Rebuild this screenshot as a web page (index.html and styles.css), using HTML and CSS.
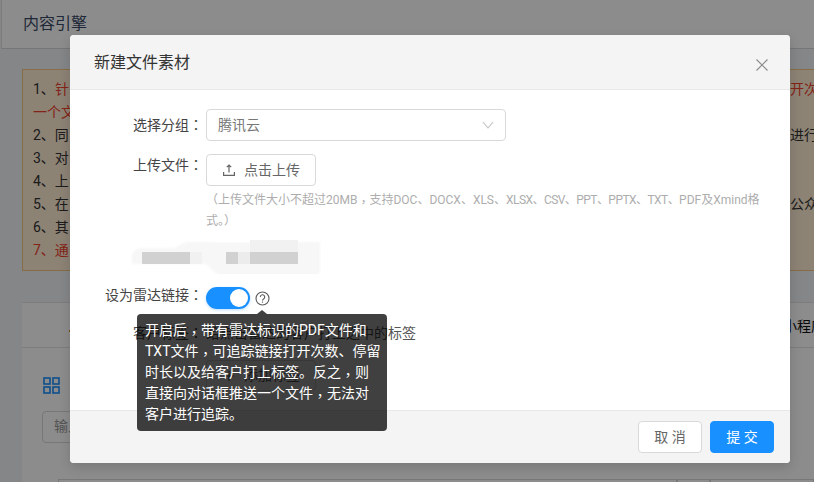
FILE: index.html
```html
<!DOCTYPE html>
<html lang="zh-CN">
<head>
<meta charset="utf-8">
<title>新建文件素材</title>
<link rel="stylesheet" href="styles.css">
</head>
<body>
<div class="page">
  <header class="page-head">内容引擎</header>
  <section class="notice">
    <div class="line red-after"><span><b class="dark">1、</b>针</span><span>开次</span></div>
    <div class="line red-after"><span>一个文</span><span></span></div>
    <div class="line"><span>2、同</span><span>进行</span></div>
    <div class="line"><span>3、对</span><span></span></div>
    <div class="line"><span>4、上</span><span></span></div>
    <div class="line"><span>5、在</span><span>公众</span></div>
    <div class="line"><span>6、其</span><span></span></div>
    <div class="line red-after"><span>7、通</span><span></span></div>
  </section>
  <section class="panel">
    <div class="tabs"><i class="tab-mark"></i><span class="tab-right">小程序</span></div>
    <div class="tools">
      <svg class="grid-icon" width="17" height="17" viewBox="0 0 17 17" fill="none" stroke="#1890ff" stroke-width="1.6"><rect x="1" y="1" width="6" height="6"/><rect x="10" y="1" width="6" height="6"/><rect x="1" y="10" width="6" height="6"/><rect x="10" y="10" width="6" height="6"/></svg>
      <div class="search">输入</div>
    </div>
    <div class="lower"><span class="lower-a"></span><span class="lower-b"></span><span class="lower-c"></span></div>
  </section>
</div>

<div class="overlay"></div>

<div class="modal">
  <div class="modal-head">
    <h2 class="modal-title">新建文件素材</h2>
    <svg class="close" width="12" height="12" viewBox="0 0 12 12" fill="none" stroke="#8c8c8c" stroke-width="1.2"><path d="M.5.5l11 11M11.500.5l-11 11"/></svg>
  </div>
  <div class="modal-body">
    <div class="row row-select">
      <label class="label">选择分组<span class="p" lang="zh-TW">：</span></label>
      <div class="select"><span>腾讯云</span>
        <svg width="12" height="8" viewBox="0 0 12 8" fill="none" stroke="#bfbfbf" stroke-width="1.1"><path d="M1 1l5 6 5-6"/></svg>
      </div>
    </div>
    <div class="row row-upload">
      <label class="label">上传文件<span class="p" lang="zh-TW">：</span></label>
      <div class="control">
        <div class="btn-upload">
          <svg width="12" height="12" viewBox="0 0 12 12" fill="none" stroke="#666" stroke-width="1.2"><path d="M6 8.500V1M3.800 3.200L6 1l2.200 2.200M.6 8v3.400h10.800V8"/></svg>
          <span>点击上传</span>
        </div>
        <p class="hint">（上传文件大小不超过20MB<span class="p c" lang="zh-TW">，</span>支持DOC、DOCX、XLS、<span class="tight">XLSX、CSV、PPT、PPTX、TXT、</span>PDF及Xmind格式。）</p>
      </div>
    </div>
    <svg class="mosaic" width="200" height="44" viewBox="0 0 200 44">
      <defs><filter id="soft"><feGaussianBlur stdDeviation="1"/></filter></defs>
      <g filter="url(#soft)" fill="#f7f7f7">
        <path d="M2 34v-9q2-7 12-7h30l12-6H190v30q-1 5-10 5H90L76 34z"/>
      </g>
      <rect x="12" y="22" width="48" height="12" fill="#d1d1d1"/>
      <rect x="60" y="22" width="12" height="12" fill="#f1f1f1"/>
      <rect x="96" y="22" width="12" height="12" fill="#d1d1d1"/>
      <rect x="108" y="22" width="12" height="12" fill="#ececec"/>
      <rect x="120" y="22" width="48" height="12" fill="#d1d1d1"/>
      <rect x="120" y="10" width="48" height="12" fill="#f1f1f1"/>
      <rect x="84" y="0" width="36" height="12" fill="#fff"/>
    </svg>
    <div class="row row-switch">
      <label class="label">设为雷达链接<span class="p" lang="zh-TW">：</span></label>
      <div class="switch-wrap">
        <span class="switch"><i class="knob"></i></span>
        <svg class="help" width="15" height="15" viewBox="0 0 15 15" fill="none" stroke="#595959"><circle cx="7.5" cy="7.500" r="6.500" stroke-width="1.1"/><path d="M5.300 6a2.200 2.200 0 1 1 3.300 1.900c-.7.4-1.100.7-1.100 1.500" stroke-width="1.1"/><path d="M7.500 10.500v1.200" stroke-width="1.1"/></svg>
      </div>
    </div>
    <div class="row row-tags">
      <label class="label">客户标签<span class="p" lang="zh-TW">：</span></label>
      <span class="tag-text">给点击雷达的客户打上选中的标签</span>
    </div>
    <div class="row row-tagbtn">
      <span></span>
      <div class="btn-tag">
        <svg width="12" height="12" viewBox="0 0 12 12" fill="none" stroke="#666" stroke-width="1.2"><path d="M6 1v10M1 6h10"/></svg>
        <span>添加标签</span>
      </div>
    </div>
  </div>
  <div class="modal-foot">
    <button class="btn">取 消</button>
    <button class="btn btn-primary">提 交</button>
  </div>
  <div class="tooltip">开启后<span class="p c" lang="zh-TW">，</span>带有雷达标识的PDF文件和TXT文件<span class="p c" lang="zh-TW">，</span>可追踪链接打开次数、停留时长以及给客户打上标签。反之<span class="p c" lang="zh-TW">，</span>则直接向对话框推送一个文件<span class="p c" lang="zh-TW">，</span>无法对客户进行追踪。</div>
</div>
</body>
</html>
```

FILE: styles.css
```css
* { box-sizing: border-box; }
html, body { margin: 0; height: 100%; }
body {
  position: relative;
  width: 814px;
  height: 482px;
  overflow: hidden;
  background: #f2f4f8;
  color: #333;
  font: 14px/21px Roboto, "Noto Sans CJK SC", sans-serif;
}
.p { font-family: "Noto Sans CJK TC", sans-serif; line-height: 1; }
.c { vertical-align: -3px; }
.tight { letter-spacing: -.55px; }
.page { height: 482px; overflow: hidden; }
.page-head {
  height: 49px;
  padding: 13px 21px 0;
  margin-left: 1px;
  font-size: 16px;
  line-height: 22px;
  color: #3a4a66;
  background: #fff;
  border-bottom: 1px solid #d8d8d8;
  border-left: 1px solid #e2e2e2;
}
.notice {
  margin: 20px -2px 0 22px;
  padding: 8px 0 9px 10px;
  height: 202px;
  background: #ffeed6;
  border: 1px solid #f5c77e;
  line-height: 23px;
  white-space: nowrap;
}
.line { display: grid; grid-template-columns: 757px 1fr; }
.red-after { color: #f0402a; }
.dark { font-weight: 400; color: #333; }
.panel { margin: 31px 0 0 22px; background: #fff; height: 180px; overflow: hidden; }
.tabs {
  display: flex;
  justify-content: space-between;
  height: 46px;
  border-top: 1px solid #e3e3e3;
  border-bottom: 1px solid #e3e3e3;
  white-space: nowrap;
}
.tab-mark { width: 2px; height: 2px; margin: 27px 0 0 47px; background: #e88a12; }
.tab-right { margin: 13px -11px 0 0; color: #111; }
.tools { padding: 29px 0 0 21px; }
.grid-icon { display: block; }
.search {
  width: 200px;
  height: 32px;
  margin: 17px 0 0 -1px;
  padding: 4px 11px;
  border: 1px solid #d9d9d9;
  border-radius: 4px;
  color: #999;
}
.lower { display: flex; margin: 36px 0 0 36px; height: 10px; }
.lower span { border: 1px solid #d9d9d9; height: 10px; }
.lower-a { width: 619px; }
.lower-b { width: 33px; }
.lower-c { flex: 1; }

.overlay { position: absolute; inset: 0; background: rgba(0, 0, 0, .45); }

.modal {
  position: absolute;
  left: 70px;
  top: 35px;
  width: 720px;
  height: 428px;
  display: flex;
  flex-direction: column;
  background: #fff;
  border-radius: 4px;
  box-shadow: 0 4px 12px rgba(0, 0, 0, .15);
}
.modal-head {
  display: flex;
  justify-content: space-between;
  align-items: flex-start;
  height: 55px;
  padding: 17px 22px 0 24px;
  background: #f4f4f4;
  border-bottom: 1px solid #e8e8e8;
  border-radius: 4px 4px 0 0;
}
.modal-title { margin: 0; font-size: 16px; font-weight: 400; line-height: 22px; color: #333; }
.close { margin-top: 7px; }
.modal-body { flex: 1; padding-top: 19px; }
.row { display: grid; grid-template-columns: 133px 1fr; column-gap: 3px; }
.label { text-align: right; color: #444; white-space: nowrap; }
.row-select .label { line-height: 32px; }
.select {
  display: flex;
  justify-content: space-between;
  align-items: center;
  width: 300px;
  height: 32px;
  padding: 0 11px;
  border: 1px solid #d9d9d9;
  border-radius: 4px;
  color: #777;
}
.row-upload { margin-top: 13px; }
.row-upload .label { line-height: 22px; }
.btn-upload, .btn-tag {
  display: flex;
  align-items: center;
  gap: 9px;
  width: 110px;
  height: 32px;
  padding-left: 16px;
  border: 1px solid #d9d9d9;
  border-radius: 4px;
  color: #666;
}
.hint { margin: 4px 0 -2px; width: 556px; font-size: 12px; line-height: 21px; color: #adadad; }
.mosaic { display: block; margin: 0 0 0 60px; }
.row-switch { margin-top: 11px; height: 22px; align-items: center; }
.row-switch .label { padding-bottom: 5px; }
.switch-wrap { display: flex; align-items: center; gap: 5px; }
.switch {
  position: relative;
  width: 44px;
  height: 22px;
  border-radius: 11px;
  background: #1890ff;
  box-shadow: 0 1px 3px rgba(24, 144, 255, .3);
}
.knob {
  position: absolute;
  right: 2px;
  top: 2px;
  width: 18px;
  height: 18px;
  border-radius: 50%;
  background: #fff;
}
.help { margin-top: 1px; }
.row-tags { margin-top: 16px; }
.tag-text { color: #555; white-space: nowrap; }
.row-tagbtn { margin-top: 16px; }
.btn-tag { height: 31px; }
.modal-foot {
  display: flex;
  justify-content: flex-end;
  gap: 8px;
  height: 53px;
  padding: 10px 16px 0;
  background: #f4f4f4;
  border-top: 1px solid #e8e8e8;
  border-radius: 0 0 4px 4px;
}
.btn {
  width: 64px;
  height: 32px;
  padding: 0;
  border: 1px solid #d9d9d9;
  border-radius: 4px;
  background: #fff;
  color: #666;
  font: inherit;
}
.btn-primary { background: #1890ff; border-color: #1890ff; color: #fff; }
.tooltip {
  position: absolute;
  left: 67px;
  top: 279px;
  width: 250px;
  padding: 6px 6px 6px 8px;
  border-radius: 4px;
  background: rgba(0, 0, 0, .75);
  color: #fff;
  line-height: 21px;
}
.tooltip::before {
  content: "";
  position: absolute;
  left: 120px;
  top: -4px;
  border: 5px solid transparent;
  border-top: 0;
  border-bottom: 4px solid rgba(0, 0, 0, .75);
}
```
